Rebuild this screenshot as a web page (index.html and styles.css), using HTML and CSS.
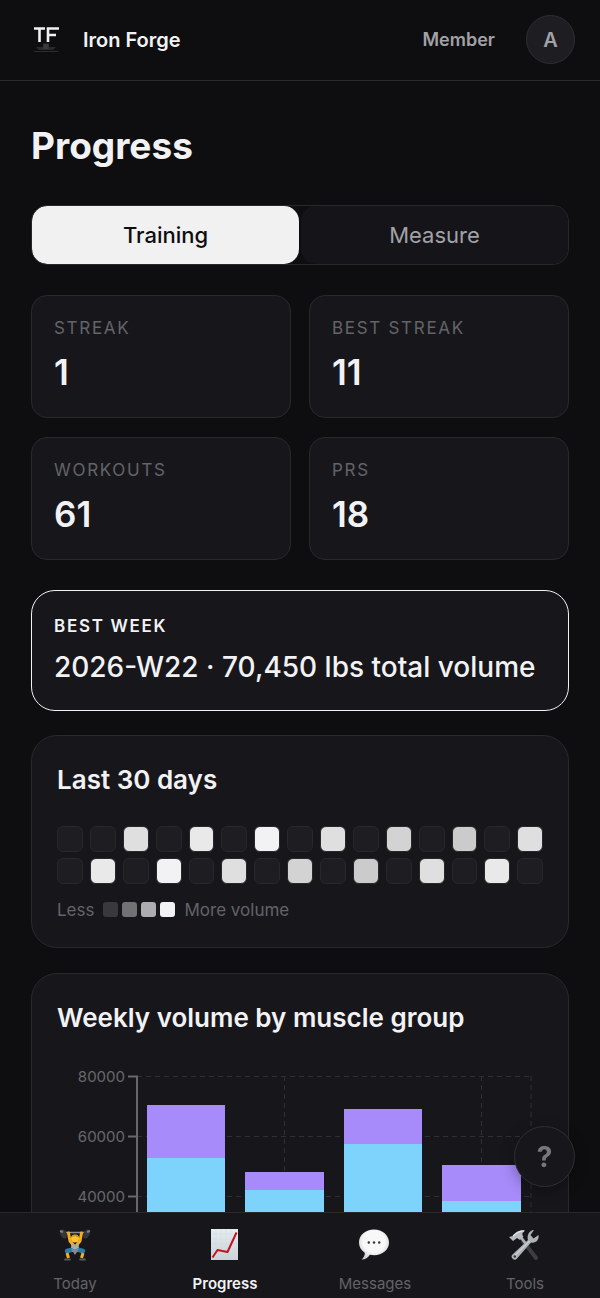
FILE: index.html
```
<!DOCTYPE html>
<html lang="en">

<head>
    <meta charset="UTF-8">
    <meta name="viewport" content="width=device-width, initial-scale=1.0">
    <title>Iron Forge - Progress</title>
    <link rel="stylesheet" href="styles.css">
</head>

<body>
    <header class="topbar">
        <a class="brand" href="#">
            <svg class="logo" viewBox="0 0 28 28" aria-hidden="true">
                <path d="M2 2.500H13M7.500 2.500V16" stroke="#f1f1f3" stroke-width="2.600" fill="none" />
                <path d="M16 16V2.500H27M16 9H24" stroke="#f1f1f3" stroke-width="2.600" fill="none" />
                <path d="M11 17.500h6v3.500h7l-3 3H7l-3-3h7z" fill="#2a2a2c" />
                <path d="M11.500 18h5v5h-5z" fill="#3a3a3c" />
                <path d="M2 25.500H26.500" stroke="#2d2d30" stroke-width="1" />
            </svg>
            <span>Iron Forge</span>
        </a>
        <div class="account">
            <span class="role">Member</span>
            <button class="avatar" type="button" aria-label="Account">A</button>
        </div>
    </header>

    <main class="content">
        <h1>Progress</h1>

        <div class="tabs">
            <button class="tab active" type="button">Training</button>
            <button class="tab" type="button">Measure</button>
        </div>

        <section class="stats">
            <div class="stat">
                <span class="label">Streak</span>
                <span class="value">1</span>
            </div>
            <div class="stat">
                <span class="label">Best streak</span>
                <span class="value">11</span>
            </div>
            <div class="stat">
                <span class="label">Workouts</span>
                <span class="value">61</span>
            </div>
            <div class="stat">
                <span class="label">PRs</span>
                <span class="value">18</span>
            </div>
        </section>

        <section class="best-week">
            <span class="label">Best week</span>
            <p>2026-W22 · 70,450 lbs total volume</p>
        </section>

        <section class="card">
            <h2>Last 30 days</h2>
            <div class="heatmap">
                <i></i><i></i><i class="v3"></i><i></i><i class="v4"></i>
                <i></i><i class="v5"></i><i></i><i class="v3"></i><i></i>
                <i class="v2"></i><i></i><i class="v1"></i><i></i><i class="v3"></i>
                <i></i><i class="v4"></i><i></i><i class="v5"></i><i></i>
                <i class="v3"></i><i></i><i class="v2"></i><i></i><i class="v1"></i>
                <i></i><i class="v3"></i><i></i><i class="v4"></i><i></i>
            </div>
            <div class="legend">
                <span>Less</span>
                <div class="scale"><i class="s1"></i><i class="s2"></i><i class="s3"></i><i class="s4"></i></div>
                <span>More volume</span>
            </div>
        </section>

        <section class="card">
            <h2>Weekly volume by muscle group</h2>
            <svg class="chart" viewBox="0 0 486 290" role="img" aria-label="Weekly volume by muscle group">
                <g class="grid">
                    <path d="M80 10.500H474M80 70.500H474M80 130.500H474M80 191.500H474" />
                    <path d="M227.500 10V252M424.500 10V252M474 10V252" />
                </g>
                <g class="legs">
                    <rect x="90" y="92" width="78" height="160" />
                    <rect x="188" y="124" width="79" height="128" />
                    <rect x="287" y="78" width="78" height="174" />
                    <rect x="385" y="135" width="79" height="117" />
                </g>
                <g class="push">
                    <rect x="90" y="39" width="78" height="53" />
                    <rect x="188" y="106" width="79" height="18" />
                    <rect x="287" y="43" width="78" height="35" />
                    <rect x="385" y="99" width="79" height="36" />
                </g>
                <path class="axis" d="M71 10.500H80V252M71 70.500H80M71 130.500H80M71 191.500H80M71 251.500H474" />
                <g class="ticks">
                    <text x="68" y="16">80000</text>
                    <text x="68" y="76">60000</text>
                    <text x="68" y="136">40000</text>
                    <text x="68" y="197">20000</text>
                    <text x="68" y="257">0</text>
                </g>
            </svg>
        </section>
    </main>

    <button class="help" type="button" aria-label="Help">?</button>

    <nav class="bottom-nav">
        <a href="#">
            <svg viewBox="0 0 32 32" aria-hidden="true">
                <path d="M3 3.500L29 3.500" stroke="#8b8e94" stroke-width="1.500" />
                <ellipse cx="4.500" cy="5" rx="3" ry="5" fill="#33363c" transform="rotate(-25 4.500 5)" />
                <ellipse cx="27.500" cy="5" rx="3" ry="5" fill="#33363c" transform="rotate(25 27.500 5)" />
                <path d="M1 2l3 1M31 2l-3 1" stroke="#7c8088" stroke-width="2" />
                <path d="M9.500 4l1.500 8 4 5M22.500 4L21 12l-4 5" fill="none" stroke="#f2b01e" stroke-width="3" stroke-linecap="round" stroke-linejoin="round" />
                <path d="M12.500 14.500L16 16l3.500-1.500 1 8.500h-9z" fill="#aaa9ad" />
                <circle cx="16" cy="9.500" r="4" fill="#fbc52d" />
                <path d="M12.200 8.500a4 4 0 0 1 7.600 0L16 7z" fill="#d58e12" />
                <path d="M12 21l-4 1M20 21l4 1" stroke="#287cad" stroke-width="4.500" stroke-linecap="round" />
                <path d="M8 24l1.500 5M24 24l-1.500 5" stroke="#f2b01e" stroke-width="3" />
                <path d="M12 20l4 6 4-6" fill="#87888d" />
                <path d="M6 30.500h5M21 30.500h5" stroke="#55585e" stroke-width="1.800" stroke-linecap="round" />
            </svg>
            <span>Today</span>
        </a>
        <a class="active" href="#">
            <svg viewBox="0 0 32 32" aria-hidden="true">
                <defs>
                    <linearGradient id="paper" x1="0" y1="0" x2="0" y2="1">
                        <stop offset="0" stop-color="#e4edf1" />
                        <stop offset="1" stop-color="#cbd2d8" />
                    </linearGradient>
                </defs>
                <rect x="2" y="0" width="27" height="31" fill="url(#paper)" />
                <path d="M7 0v31M12 0v31M17 0v31M22 0v31M2 5h27M2 10h27M2 15h27M2 20h27M2 25h27" stroke="#cfd9df" stroke-width=".5" />
                <path d="M3.500 28.500l5-7.500 10 2L27.500 3.500" fill="none" stroke="#c3141d" stroke-width="2" stroke-linejoin="round" />
            </svg>
            <span>Progress</span>
        </a>
        <a href="#">
            <svg viewBox="0 0 32 32" aria-hidden="true">
                <defs>
                    <radialGradient id="bubble" cx=".5" cy=".4" r=".6">
                        <stop offset=".6" stop-color="#f8f8f8" />
                        <stop offset="1" stop-color="#cfcfd1" />
                    </radialGradient>
                </defs>
                <path d="M15 0.500C6.500 0.500 0 6 0 13.500c0 4.500 2.300 8 5.800 10.200.2 2.500-1 4.600-3.200 6.800 3.700-.1 6.500-1.600 8.200-4.800 1.300.3 2.700.5 4.200.5 8.500 0 15-5.400 15-12.700S23.500 0.500 15 0.500z" fill="url(#bubble)" />
                <circle cx="9.800" cy="13.500" r="1.200" fill="#333" />
                <circle cx="15" cy="13.500" r="1.200" fill="#333" />
                <circle cx="20.200" cy="13.500" r="1.200" fill="#333" />
            </svg>
            <span>Messages</span>
        </a>
        <a href="#">
            <svg viewBox="0 0 32 32" aria-hidden="true">
                <path d="M14 12l13 17" stroke="#3c3e44" stroke-width="4" stroke-linecap="round" />
                <path d="M11 7l6 8" stroke="#aeb1b6" stroke-width="2.600" />
                <path d="M0 8l4-1c2-4 7-6.500 12-5.500l-2 2c-1 1-1 2.500.5 4L11 11l-3-2-4 3z" fill="#b8bcc1" />
                <path d="M4 7c3-3 6-5 11-5" fill="none" stroke="#eceef0" stroke-width="1.200" />
                <path d="M25 1l-3.500 5 3 3.500 5-3.500c1 5-3 8.500-7.500 7.500L8 29.500a3 3 0 0 1-4.500-4L19 11c-1.500-5 1.500-9.500 6-10z" fill="#aeb2b7" />
                <path d="M20.500 12L5.500 27" stroke="#e1e4e6" stroke-width="1" />
                <circle cx="5.800" cy="27.500" r="1.200" fill="#333" />
            </svg>
            <span>Tools</span>
        </a>
    </nav>
</body>

</html>
```
FILE: styles.css
```
* {
    box-sizing: border-box;
}

body {
    font-family: Inter, "Liberation Sans", sans-serif;
    margin: 0;
    height: 100vh;
    display: flex;
    flex-direction: column;
    background-color: #0e0e10;
    color: #f2f2f4;
}

h1,
h2,
p {
    margin: 0;
}

button {
    font-family: inherit;
    padding: 0;
    cursor: pointer;
}

a {
    color: inherit;
    text-decoration: none;
}

.topbar {
    flex: none;
    display: flex;
    align-items: center;
    justify-content: space-between;
    padding: 15px 25px 16px 32px;
    border-bottom: 1px solid #2a2a2d;
}

.brand {
    display: flex;
    align-items: center;
    gap: 23px;
    font-size: 20px;
    line-height: 24px;
    font-weight: 600;
}

.logo {
    width: 28px;
    height: 28px;
}

.account {
    display: flex;
    align-items: center;
    gap: 31px;
}

.role {
    font-size: 18px;
    font-weight: 600;
    color: #a1a1a6;
}

.avatar {
    width: 49px;
    height: 49px;
    border: 1px solid #2e2e32;
    border-radius: 50%;
    background-color: #1e1d22;
    color: #a1a1a6;
    font-size: 20px;
    font-weight: 600;
}

.content {
    flex: 1;
    min-height: 0;
    overflow-y: auto;
    scrollbar-width: none;
    padding: 41px 31px;
}

h1 {
    font-size: 37px;
    line-height: 48px;
    font-weight: 700;
    margin-bottom: 35px;
}

.tabs {
    display: grid;
    grid-template-columns: 1fr 1fr;
    gap: 2px;
    border: 1px solid #28282b;
    border-radius: 16px;
    overflow: hidden;
    margin-bottom: 30px;
}

.tab {
    height: 58px;
    border: none;
    border-radius: 15px;
    background-color: #151519;
    color: #a1a1a6;
    font-size: 22px;
    font-weight: 400;
}

.tab.active {
    background-color: #f1f1f2;
    color: #0e0e10;
    font-weight: 500;
}

.stats {
    display: grid;
    grid-template-columns: 1fr 1fr;
    gap: 19px 18px;
    margin-bottom: 30px;
}

.stat,
.best-week,
.card {
    background-color: #17171b;
    border: 1px solid #29292c;
}

.stat {
    display: flex;
    flex-direction: column;
    gap: 11px;
    padding: 22px 22px 21px;
    border-radius: 16px;
}

.label {
    display: block;
    font-size: 17px;
    line-height: 20px;
    letter-spacing: 0.1em;
    text-transform: uppercase;
}

.stat .label {
    color: #636368;
}

.value {
    font-size: 35px;
    line-height: 47px;
    font-weight: 600;
}

.best-week {
    padding: 25px 22px 24px;
    border-color: #f1f1f3;
    border-radius: 24px;
    margin-bottom: 24px;
}

.best-week .label {
    font-weight: 600;
    margin-bottom: 12px;
}

.best-week p {
    font-size: 28px;
    line-height: 38px;
    font-weight: 500;
}

.card {
    padding: 25px;
    border-radius: 26px;
    margin-bottom: 25px;
}

h2 {
    font-size: 26px;
    line-height: 38px;
    font-weight: 600;
    margin-bottom: 27px;
}

.heatmap {
    display: grid;
    grid-template-columns: repeat(15, 1fr);
    gap: 6px 7px;
}

.heatmap i {
    aspect-ratio: 1;
    border: 1px solid #28282c;
    border-radius: 6px;
    background-color: #1e1d22;
}

.heatmap .v1 {
    background-color: #cbcbcc;
}

.heatmap .v2 {
    background-color: #d3d3d4;
}

.heatmap .v3 {
    background-color: #dfdfe0;
}

.heatmap .v4 {
    background-color: #e9e9ea;
}

.heatmap .v5 {
    background-color: #f2f2f4;
}

.legend {
    display: flex;
    align-items: center;
    gap: 9px;
    margin-top: 14px;
    font-size: 17px;
    line-height: 24px;
    color: #636368;
}

.scale {
    display: flex;
    gap: 4px;
}

.scale i {
    width: 15px;
    height: 15px;
    border-radius: 3px;
}

.scale .s1 {
    background-color: #39383d;
}

.scale .s2 {
    background-color: #727275;
}

.scale .s3 {
    background-color: #adadaf;
}

.scale .s4 {
    background-color: #f2f2f4;
}

.chart {
    display: block;
    width: 100%;
    margin-top: 29px;
}

.grid {
    fill: none;
    stroke: #303034;
    stroke-dasharray: 5 4;
}

.legs {
    fill: #7dd3fc;
}

.push {
    fill: #a78bfa;
}

.axis {
    fill: none;
    stroke: #68686c;
    stroke-width: 2;
}

.ticks {
    font-size: 15px;
    fill: #68686c;
    text-anchor: end;
}

.help {
    position: fixed;
    right: 25px;
    bottom: 111px;
    width: 61px;
    height: 61px;
    border: 1px solid #303033;
    border-radius: 50%;
    background-color: #17171b;
    box-shadow: 0 4px 14px rgba(0, 0, 0, 0.3);
    color: #77777b;
    font-size: 28px;
    font-weight: 700;
}

.bottom-nav {
    flex: none;
    display: grid;
    grid-template-columns: repeat(4, 1fr);
    padding: 16px 0 4px;
    border-top: 1px solid #29292c;
    background-color: #17171b;
}

.bottom-nav a {
    display: flex;
    flex-direction: column;
    align-items: center;
    gap: 13px;
    font-size: 15px;
    line-height: 20px;
    color: #636368;
}

.bottom-nav a.active {
    color: #f2f2f4;
    font-weight: 600;
}

.bottom-nav svg {
    width: 32px;
    height: 32px;
}
```
